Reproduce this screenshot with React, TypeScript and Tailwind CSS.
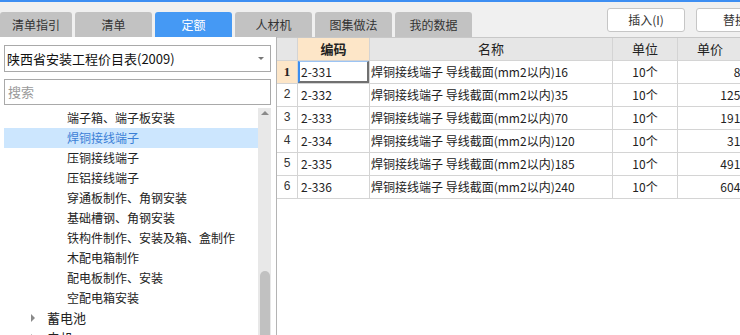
const tabs = ['清单指引', '清单', '定额', '人材机', '图集做法', '我的数据'];

type TreeItem = { label: string; level: 2 | 3; selected?: boolean; collapsed?: boolean };

const tree: TreeItem[] = [
  { label: '端子箱、端子板安装', level: 3 },
  { label: '焊铜接线端子', level: 3, selected: true },
  { label: '压铜接线端子', level: 3 },
  { label: '压铝接线端子', level: 3 },
  { label: '穿通板制作、角钢安装', level: 3 },
  { label: '基础槽钢、角钢安装', level: 3 },
  { label: '铁构件制作、安装及箱、盒制作', level: 3 },
  { label: '木配电箱制作', level: 3 },
  { label: '配电板制作、安装', level: 3 },
  { label: '空配电箱安装', level: 3 },
  { label: '蓄电池', level: 2, collapsed: true },
  { label: '电机', level: 2, collapsed: true },
];

const rows = [
  { code: '2-331', name: '焊铜接线端子 导线截面(mm2以内)16', unit: '10个', price: '80.4' },
  { code: '2-332', name: '焊铜接线端子 导线截面(mm2以内)35', unit: '10个', price: '125.73' },
  { code: '2-333', name: '焊铜接线端子 导线截面(mm2以内)70', unit: '10个', price: '191.06' },
  { code: '2-334', name: '焊铜接线端子 导线截面(mm2以内)120', unit: '10个', price: '318.6' },
  { code: '2-335', name: '焊铜接线端子 导线截面(mm2以内)185', unit: '10个', price: '491.38' },
  { code: '2-336', name: '焊铜接线端子 导线截面(mm2以内)240', unit: '10个', price: '604.55' },
];

const cols = 'grid grid-cols-[21px_72px_243px_65px_84px]';
const cell = 'border-r border-b border-[#d4d4d4] h-[23px] flex items-center overflow-hidden whitespace-nowrap';

export default function App() {
  return (
    <div className="w-[740px] h-[335px] overflow-hidden bg-[#f0f0f0] flex flex-col font-['Noto_Sans_CJK_SC',sans-serif] text-[#222]">
      <div className="h-[2px] bg-[#3d8ef2]" />

      {/* tab bar */}
      <div className="h-[35px] flex items-end">
        <div className="flex items-end gap-[3px]">
          {tabs.map((t, i) => (
            <div
              key={t}
              className={`${i === 0 ? 'w-[72px]' : 'w-[77px]'} h-[25px] rounded-t-[3px] flex items-center justify-center text-[12px] ${
                t === '定额' ? 'bg-[#4599f4] text-white' : 'bg-[#c2c2c2] text-[#333]'
              }`}
            >
              {t}
            </div>
          ))}
        </div>
        <div className="ml-auto self-start mt-[6px] flex gap-[11px]">
          <button className="w-[78px] h-[24px] rounded-[3px] border border-[#c6c6c6] bg-white text-[12px] text-[#333]">
            插入(I)
          </button>
          <button className="w-[78px] h-[24px] rounded-[3px] border border-[#c6c6c6] bg-white text-[12px] text-[#333] -mr-[34px]">
            替换
          </button>
        </div>
      </div>

      <div className="flex flex-1 min-h-0">
        {/* left panel */}
        <div className="w-[277px] bg-white flex flex-col pl-[4px] pt-[8px] border-r border-[#b4b4b4]">
          <div className="w-[267px] h-[27px] border border-[#a9a9a9] flex items-center pl-[2px] pr-[6px] text-[13px] text-[#111]">
            <span>陕西省安装工程价目表(2009)</span>
            <span className="ml-auto w-0 h-0 border-l-[3px] border-r-[3px] border-t-[3px] border-l-transparent border-r-transparent border-t-[#777]" />
          </div>
          <div className="mt-[7px] w-[267px] h-[26px] border border-[#a9a9a9] flex items-center pl-[3px] text-[13px] text-[#9a9a9a]">
            搜索
          </div>
          <div className="mt-[3px] flex flex-1 min-h-0 overflow-hidden">
            <div className="w-[254px] flex flex-col">
              {tree.map((it) => (
                <div
                  key={it.label}
                  className={`h-[20px] shrink-0 flex items-center text-[12px] ${
                    it.selected ? 'bg-[#cce6fe] text-[#3b7fd6]' : 'text-[#222]'
                  } ${it.level === 3 ? 'pl-[63px]' : 'pl-[27px]'}`}
                >
                  {it.level === 2 && (
                    <span className="w-0 h-0 mr-[12px] border-t-[4px] border-b-[4px] border-l-[4px] border-t-transparent border-b-transparent border-l-[#8a8a8a]" />
                  )}
                  <span className={it.level === 2 ? 'text-[13px]' : ''}>{it.label}</span>
                </div>
              ))}
            </div>
            <div className="w-[13px] bg-[#e8e8e8] flex flex-col items-center">
              <span className="mt-[3px] w-0 h-0 border-l-[4px] border-r-[4px] border-b-[4px] border-l-transparent border-r-transparent border-b-[#8a8a8a]" />
              <div className="mt-auto w-[10px] h-[64px] rounded-t-[5px] bg-[#c1c1c1]" />
            </div>
          </div>
        </div>

        {/* table */}
        <div className="flex-1 bg-white overflow-hidden border-t border-[#c8c8c8]">
          <div className={`${cols} w-[485px] text-[13px]`}>
            <div className={`${cell} bg-[#e6e6e6]`} />
            <div className={`${cell} bg-[#fde6c8] justify-center font-bold`}>编码</div>
            <div className={`${cell} bg-[#e6e6e6] justify-center`}>名称</div>
            <div className={`${cell} bg-[#e6e6e6] justify-center`}>单位</div>
            <div className={`${cell} bg-[#e6e6e6] pl-[19px]`}>单价</div>
          </div>
          {rows.map((r, i) => (
            <div key={r.code} className={`${cols} w-[485px] text-[12px]`}>
              <div
                className={`${cell} justify-center ${
                  i === 0
                    ? "bg-[#fde6c8] font-bold font-['Liberation_Serif',serif] text-[13px]"
                    : "font-['Liberation_Mono',monospace] text-[#333]"
                }`}
              >
                {i + 1}
              </div>
              <div className={`${cell} relative pl-[3px]`}>
                {r.code}
                {i === 0 && (
                  <span className="absolute inset-0 border-t border-l-2 border-t-[#9cc4f4] border-l-[#3c8ef0] border-r-2 border-b-2 border-r-[#707070] border-b-[#707070]" />
                )}
              </div>
              <div className={`${cell} pl-[1px]`}>{r.name}</div>
              <div className={`${cell} justify-center`}>{r.unit}</div>
              <div className={`${cell} justify-end pr-[4px]`}>{r.price}</div>
            </div>
          ))}
        </div>
      </div>
    </div>
  );
}
